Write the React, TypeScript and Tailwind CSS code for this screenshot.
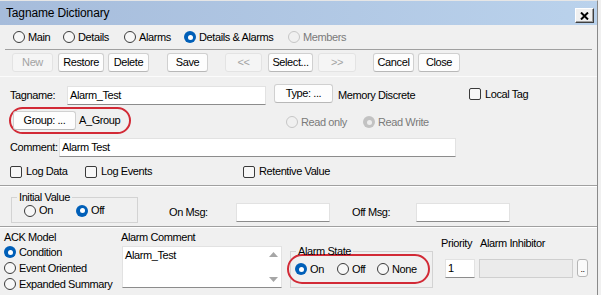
import clsx from 'clsx';

type RadioProps = {
  label: string;
  checked?: boolean;
  disabled?: boolean;
  className?: string;
};

function RadioDot({ checked, disabled }: { checked?: boolean; disabled?: boolean }) {
  if (checked) {
    return (
      <span
        className={clsx(
          'flex h-[12px] w-[12px] shrink-0 items-center justify-center rounded-full',
          disabled ? 'bg-[#c2c2c2]' : 'bg-[#005fb8]'
        )}
      >
        <span className={clsx('h-[5px] w-[5px] rounded-full', disabled ? 'bg-[#ededed]' : 'bg-white')} />
      </span>
    );
  }
  return (
    <span
      className={clsx(
        'h-[12px] w-[12px] shrink-0 rounded-full border',
        disabled ? 'border-[#c6c6c6] bg-[#f0f0f0]' : 'border-[#3a3a3a] bg-[#f7f7f7]'
      )}
    />
  );
}

function Radio({ label, checked, disabled, className }: RadioProps) {
  return (
    <div className={clsx('flex h-[13px] shrink-0 items-center', className)}>
      <RadioDot checked={checked} disabled={disabled} />
      <span className={clsx('ml-[3px] leading-[13px]', disabled && 'text-[#7a7a7a]')}>{label}</span>
    </div>
  );
}

function Check({ label, className }: { label: string; className?: string }) {
  return (
    <div className={clsx('flex h-[13px] shrink-0 items-center', className)}>
      <span className="h-[12px] w-[12px] shrink-0 rounded-[2px] border border-[#3a3a3a] bg-[#f7f7f7]" />
      <span className="ml-[4px] leading-[13px]">{label}</span>
    </div>
  );
}

function Btn({ label, disabled, className }: { label: string; disabled?: boolean; className?: string }) {
  return (
    <div
      className={clsx(
        'flex h-[19px] shrink-0 items-center justify-center rounded-[3px] border leading-[13px]',
        disabled
          ? 'border-[#e3e3e3] bg-[#f5f5f5] text-[#a3a3a3]'
          : 'border-[#d0d0d0] border-b-[#b8b8b8] bg-[#fdfdfd]',
        className
      )}
    >
      {label}
    </div>
  );
}

function Field({ value, className }: { value?: string; className?: string }) {
  return (
    <div
      className={clsx(
        'flex h-[19px] shrink-0 items-center border border-[#e2e2e2] border-b-[#8c8c8c] bg-white pl-[2px] leading-[13px]',
        className
      )}
    >
      {value}
    </div>
  );
}

function Sep() {
  return <div className="h-[2px] shrink-0 border-t border-b border-t-[#a0a0a0] border-b-white" />;
}

export default function App() {
  return (
    <div className="flex h-[295px] w-[601px] overflow-hidden bg-[#f0f0f0] font-['Liberation_Sans',Arial,sans-serif] text-[11px] leading-none tracking-[-0.4px] text-black">
      <div className="flex h-full w-[598px] flex-col border-t border-r border-t-[#e6e6e6] border-r-[#8a8a8a]">
        {/* title bar */}
        <div className="flex h-[24px] shrink-0 items-center justify-between bg-linear-to-r from-[#a6bcdb] to-[#bad2ec] pl-[6px] pr-[3px]">
          <span className="text-[12px] tracking-[-0.15px]">Tagname Dictionary</span>
          <div className="mb-[2px] flex h-[15px] w-[19px] items-center justify-center self-end border border-t-white border-l-white border-r-[#404040] border-b-[#404040] bg-[#f0f0f0] shadow-[inset_-1px_-1px_0_#a0a0a0]">
            <svg width="9" height="8" viewBox="0 0 9 8">
              <path d="M1 0.5 L8 7.5 M8 0.5 L1 7.5" stroke="#000" strokeWidth="2" />
            </svg>
          </div>
        </div>

        {/* tabs */}
        <div className="flex h-[24px] shrink-0 items-center pl-[13px]">
          <Radio label="Main" className="w-[50px]" />
          <Radio label="Details" className="w-[61px]" />
          <Radio label="Alarms" className="w-[60px]" />
          <Radio label="Details & Alarms" checked className="w-[104px]" />
          <Radio label="Members" disabled />
        </div>
        <div className="mx-[5px] h-px shrink-0 bg-[#a0a0a0]" />

        {/* toolbar */}
        <div className="flex h-[26px] shrink-0 items-start pt-[3px]">
          <Btn label="New" disabled className="ml-[12px] w-[41px]" />
          <Btn label="Restore" className="ml-[5px] w-[46px]" />
          <Btn label="Delete" className="ml-[4px] w-[41px]" />
          <Btn label="Save" className="ml-[18px] w-[41px]" />
          <Btn label="<<" disabled className="ml-[17px] w-[37px]" />
          <Btn label="Select..." className="ml-[6px] w-[45px]" />
          <Btn label=">>" disabled className="ml-[5px] w-[38px]" />
          <Btn label="Cancel" className="ml-[17px] w-[41px]" />
          <Btn label="Close" className="ml-[4px] w-[42px]" />
        </div>
        <div className="h-px shrink-0 bg-[#fbfbfb]" />

        {/* tag details */}
        <div className="flex h-[108px] shrink-0 flex-col">
          <div className="mt-[8px] flex h-[21px] items-center pl-[10px]">
            <span className="w-[57px] leading-[13px]">Tagname:</span>
            <Field value="Alarm_Test" className="w-[199px]" />
            <Btn label="Type: ..." className="mb-[4px] ml-[8px] w-[59px]" />
            <span className="ml-[5px] w-[131px] leading-[13px]">Memory Discrete</span>
            <Check label="Local Tag" className="mb-[3px]" />
          </div>

          <div className="mt-[1px] flex h-[27px] items-center pl-[9px]">
            <div className="flex h-[27px] w-[122px] shrink-0 items-center rounded-[14px] border-2 border-[#d22a36] pl-[2px]">
              <Btn label="Group: ..." className="h-[18px] w-[63px]" />
              <span className="ml-[3px] leading-[13px]">A_Group</span>
            </div>
            <Radio label="Read only" disabled className="mt-[3px] ml-[155px] w-[77px]" />
            <Radio label="Read Write" checked disabled className="mt-[3px]" />
          </div>

          <div className="mt-[4px] flex h-[19px] items-center pl-[10px]">
            <span className="w-[49px] leading-[13px]">Comment:</span>
            <Field value="Alarm Test" className="w-[397px]" />
          </div>

          <div className="mt-[8px] flex h-[13px] items-center pl-[10px]">
            <Check label="Log Data" className="w-[75px]" />
            <Check label="Log Events" className="w-[158px]" />
            <Check label="Retentive Value" />
          </div>
        </div>
        <Sep />

        {/* initial value */}
        <div className="flex h-[39px] shrink-0 items-start">
          <fieldset className="mt-[4px] ml-[11px] h-[32px] w-[127px] border border-[#d3d3d3]">
            <legend className="ml-[5px] px-[2px] leading-[13px]">Initial Value</legend>
            <div className="flex items-center pl-[12px]">
              <Radio label="On" className="w-[52px]" />
              <Radio label="Off" checked />
            </div>
          </fieldset>
          <div className="mt-[16px] ml-[31px] flex items-center">
            <span className="w-[67px] leading-[13px]">On Msg:</span>
            <Field className="w-[94px]" />
            <span className="ml-[22px] w-[64px] leading-[13px]">Off Msg:</span>
            <Field className="w-[94px]" />
          </div>
        </div>
        <Sep />

        {/* alarm settings */}
        <div className="flex min-h-0 flex-1 items-start">
          <div className="flex w-[121px] shrink-0 flex-col pl-[4px]">
            <span className="mt-[3px] leading-[13px]">ACK Model</span>
            <div className="flex h-[16px] items-center">
              <Radio label="Condition" checked />
            </div>
            <div className="flex h-[16px] items-center">
              <Radio label="Event Oriented" />
            </div>
            <div className="flex h-[16px] items-center">
              <Radio label="Expanded Summary" />
            </div>
          </div>

          <div className="flex w-[161px] shrink-0 flex-col">
            <span className="mt-[3px] leading-[13px]">Alarm Comment</span>
            <div className="mt-[2px] ml-[1px] flex h-[42px] w-[160px] border border-[#e2e2e2] border-b-[#8c8c8c] bg-white">
              <div className="flex-1 pt-[2px] pl-[2px] leading-[13px]">Alarm_Test</div>
              <div className="flex w-[16px] flex-col items-center justify-between py-[5px]">
                <svg width="9" height="5" viewBox="0 0 9 5">
                  <path d="M0 5 L4.5 0 L9 5 Z" fill="#a6a6a6" />
                </svg>
                <svg width="9" height="5" viewBox="0 0 9 5">
                  <path d="M0 0 L9 0 L4.5 5 Z" fill="#a6a6a6" />
                </svg>
              </div>
            </div>
          </div>

          <fieldset className="mt-[17px] ml-[8px] h-[43px] w-[143px] shrink-0 border border-[#d3d3d3]">
            <legend className="ml-[5px] px-[2px] leading-[13px]">Alarm State</legend>
            <div className="-mt-[4px] -ml-[4px] flex h-[30px] w-[143px] items-center rounded-[15px] border-2 border-[#d22a36] pl-[6px]">
              <Radio label="On" checked className="w-[42px]" />
              <Radio label="Off" className="w-[40px]" />
              <Radio label="None" />
            </div>
          </fieldset>

          <div className="ml-[8px] flex flex-col">
            <div className="mt-[9px] flex leading-[13px]">
              <span className="w-[39px]">Priority</span>
              <span>Alarm Inhibitor</span>
            </div>
            <div className="mt-[9px] flex items-start">
              <Field value="1" className="ml-[4px] w-[30px]" />
              <div className="ml-[4px] h-[19px] w-[94px] border border-[#cfcfcf] bg-[#ebebeb]" />
              <div className="ml-[4px] flex h-[18px] w-[11px] items-end justify-center rounded-[3px] border border-[#b5b5b5] bg-[#fafafa] pb-[2px] text-[9px] leading-none">
                ..
              </div>
            </div>
          </div>
        </div>
      </div>
    </div>
  );
}
